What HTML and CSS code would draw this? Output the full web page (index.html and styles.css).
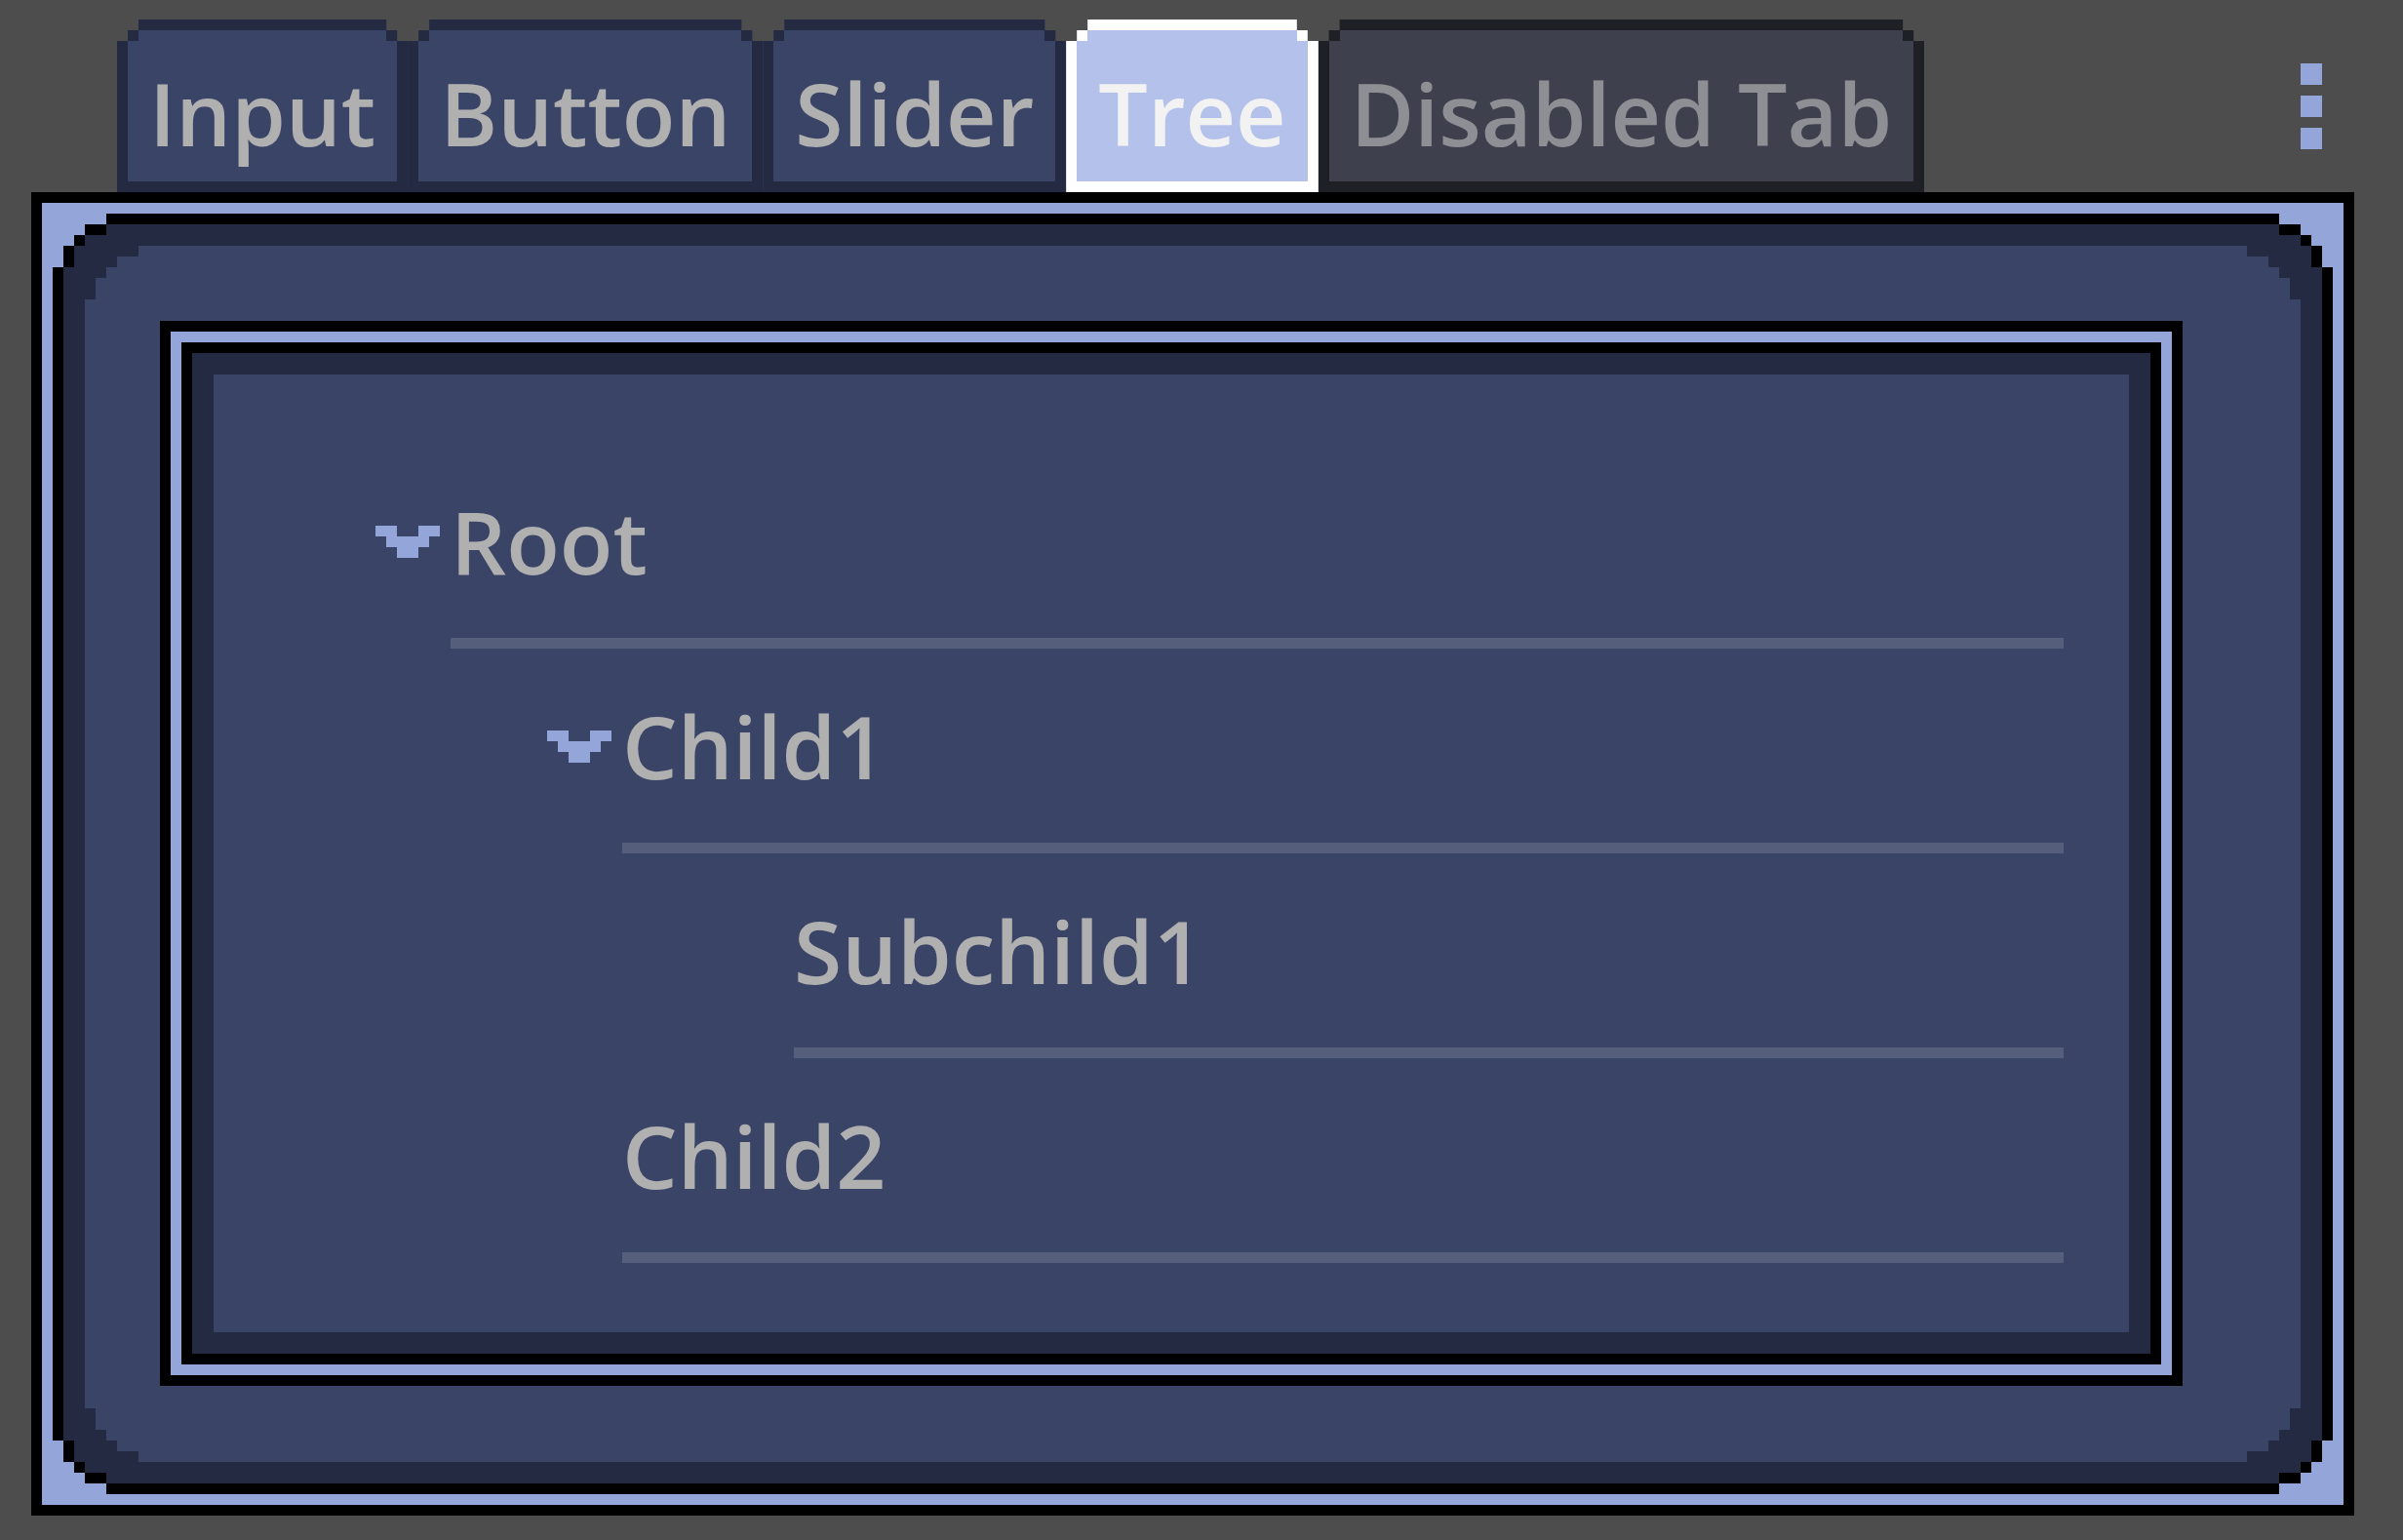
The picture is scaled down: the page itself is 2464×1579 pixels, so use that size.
FILE: index.html
```html
<!DOCTYPE html>
<html lang="en">
<head>
<meta charset="utf-8">
<title>Tabs</title>
<link rel="stylesheet" href="styles.css">
</head>
<body>
<div class="app">
  <div class="topbar">
    <div class="tabs">
      <div class="tab">Input</div>
      <div class="tab">Button</div>
      <div class="tab">Slider</div>
      <div class="tab tab-selected">Tree</div>
      <div class="tab tab-disabled">Disabled Tab</div>
    </div>
    <div class="kebab"><span></span><span></span><span></span></div>
  </div>
  <div class="panel">
    <div class="tree">
      <div class="row l0">
        <span class="twisty"><svg viewBox="0 0 6 3" width="66" height="33" shape-rendering="crispEdges"><rect x="0" y="0" width="2" height="1"/><rect x="4" y="0" width="2" height="1"/><rect x="1" y="1" width="4" height="1"/><rect x="2" y="2" width="2" height="1"/></svg></span>
        <div class="node">Root</div>
      </div>
      <div class="row l1">
        <span class="twisty"><svg viewBox="0 0 6 3" width="66" height="33" shape-rendering="crispEdges"><rect x="0" y="0" width="2" height="1"/><rect x="4" y="0" width="2" height="1"/><rect x="1" y="1" width="4" height="1"/><rect x="2" y="2" width="2" height="1"/></svg></span>
        <div class="node">Child1</div>
      </div>
      <div class="row l2">
        <span class="twisty"></span>
        <div class="node">Subchild1</div>
      </div>
      <div class="row l1">
        <span class="twisty"></span>
        <div class="node">Child2</div>
      </div>
    </div>
  </div>
</div>
</body>
</html>
```

FILE: styles.css
```css
html, body {
  margin: 0;
  padding: 0;
  background: #4d4d4d;
}

body {
  font-family: "Open Sans", "Noto Sans", sans-serif;
  font-weight: 600;
  font-size: 89.5px;
  color: #b0b0b0;
}

.app {
  padding: 20px 50px 0 32px;
}

.topbar {
  display: flex;
  align-items: center;
  justify-content: space-between;
  padding-left: 88px;
  padding-right: 33px;
}

.tabs {
  display: flex;
}

.tab {
  --b: #252a43;
  --f: #3a4466;
  box-sizing: border-box;
  height: 177px;
  padding: 39px 22px 26px;
  line-height: 90px;
  white-space: nowrap;
  border: 11px solid var(--b);
  background:
    linear-gradient(var(--b), var(--b)) left top / 11px 11px no-repeat,
    linear-gradient(var(--b), var(--b)) right top / 11px 11px no-repeat,
    var(--f);
  background-origin: padding-box;
  clip-path: polygon(0 22px, 11px 22px, 11px 11px, 22px 11px, 22px 0,
    calc(100% - 22px) 0, calc(100% - 22px) 11px, calc(100% - 11px) 11px,
    calc(100% - 11px) 22px, 100% 22px, 100% 100%, 0 100%);
}

.tab-selected {
  --b: #ffffff;
  --f: #b3c1eb;
  color: #f2f2f2;
}

.tab-disabled {
  --b: #1f2026;
  --f: #3e404d;
  color: #8e8f94;
}

.kebab {
  display: flex;
  flex-direction: column;
  gap: 11px;
}

.kebab span {
  display: block;
  width: 22px;
  height: 22px;
  background: #94a6d9;
}

.panel {
  border-style: solid;
  border-width: 55px;
  border-image-source: url("data:image/svg+xml,<svg xmlns='http://www.w3.org/2000/svg' width='231' height='231' viewBox='0 0 21 21' shape-rendering='crispEdges'><rect width='21' height='21' fill='%23000'/><rect x='1' y='1' width='19' height='19' fill='%2394a6d9'/><polygon fill='%23000' points='2,7 3,7 3,5 4,5 4,4 5,4 5,3 7,3 7,2 14,2 14,3 16,3 16,4 17,4 17,5 18,5 18,7 19,7 19,14 18,14 18,16 17,16 17,17 16,17 16,18 14,18 14,19 7,19 7,18 5,18 5,17 4,17 4,16 3,16 3,14 2,14'/><polygon fill='%23252a43' points='3,7 4,7 4,5 5,5 5,4 7,4 7,3 14,3 14,4 16,4 16,5 17,5 17,7 18,7 18,14 17,14 17,16 16,16 16,17 14,17 14,18 7,18 7,17 5,17 5,16 4,16 4,14 3,14'/><polygon fill='%233a4466' points='5,10 6,10 6,8 7,8 7,7 8,7 8,6 10,6 10,5 11,5 11,6 13,6 13,7 14,7 14,8 15,8 15,10 16,10 16,11 15,11 15,13 14,13 14,14 13,14 13,15 11,15 11,16 10,16 10,15 8,15 8,14 7,14 7,13 6,13 6,11 5,11'/></svg>");
  border-image-slice: 110 fill;
  border-image-width: 110px;
  border-image-repeat: stretch;
  padding: 77px 121px 78px 77px;
}

.tree {
  box-sizing: border-box;
  height: 1092px;
  border: 11px solid #000;
  background: #3a4466;
  box-shadow:
    inset 0 0 0 11px #94a6d9,
    inset 0 0 0 22px #000,
    inset 0 0 0 44px #252a43;
  padding: 115px 111px 0 210px;
}

.row {
  display: flex;
  align-items: flex-start;
  padding-top: 54px;
}

.row.l1 { padding-left: 176px; }
.row.l2 { padding-left: 352px; }

.twisty {
  flex: none;
  width: 66px;
  height: 33px;
  margin: 30px 11px 0 0;
  fill: #94a6d9;
}

.twisty svg {
  display: block;
}

.node {
  flex: 1;
  line-height: 90px;
  padding-bottom: 55px;
  border-bottom: 11px solid #555e7b;
  white-space: nowrap;
}
```
